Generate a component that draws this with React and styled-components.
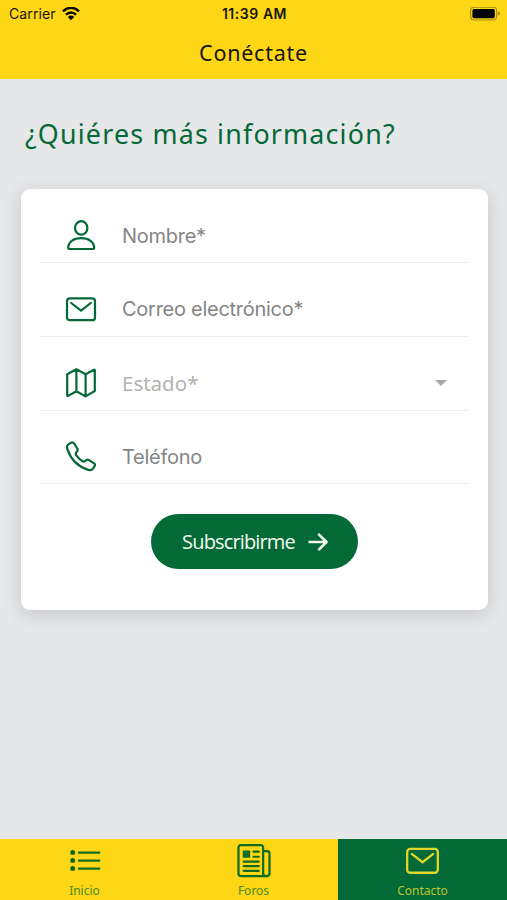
import React from 'react';
import styled, { createGlobalStyle } from 'styled-components';

const GlobalStyle = createGlobalStyle`
  :root {
    --yellow: #fdd616;
    --green: #036937;
    --grey: #e6e7e9;
    --line: #ededed;
  }

  * {
    box-sizing: border-box;
  }

  body {
    margin: 0;
    background: var(--grey);
    font-family: 'Noto Sans', 'Open Sans', sans-serif;
  }
`;

const Screen = styled.div`
  width: 507px;
  height: 900px;
  display: flex;
  flex-direction: column;
  background: var(--grey);
  overflow: hidden;
`;

const Header = styled.header`
  height: 79px;
  flex-shrink: 0;
  background: var(--yellow);
  color: #17150a;
`;

const StatusBar = styled.div`
  height: 27px;
  padding: 0 7px 0 9px;
  display: grid;
  grid-template-columns: 1fr auto 1fr;
  align-items: center;
  font-family: Inter, sans-serif;
  font-size: 14px;
  line-height: 27px;

  .carrier {
    display: flex;
    align-items: center;
    gap: 6px;
    letter-spacing: 0.1px;
  }

  .time {
    font-weight: 600;
    letter-spacing: 0.55px;
  }

  .battery {
    justify-self: end;
  }

  svg {
    display: block;
  }
`;

const Title = styled.h1`
  margin: 0;
  text-align: center;
  font-size: 21.5px;
  font-weight: 400;
  line-height: 52px;
  letter-spacing: 0.75px;
`;

const Main = styled.main`
  flex: 1;
  padding: 0 19.5px 0 20.5px;
`;

const Question = styled.h2`
  margin: 0;
  padding: 35px 0 0 4.5px;
  height: 110px;
  color: var(--green);
  font-size: 26.8px;
  font-weight: 400;
  line-height: 40px;
  letter-spacing: 1.2px;
  white-space: nowrap;
`;

const Card = styled.form`
  height: 420.5px;
  padding: 0 19.5px;
  display: flex;
  flex-direction: column;
  align-items: center;
  background: white;
  border-radius: 9px;
  box-shadow: 0 4px 18px rgba(60, 70, 75, 0.2);
`;

const Row = styled.label`
  width: 100%;
  height: ${props => props.$first ? 74 : 73.8}px;
  padding: 20px 21px 0 25px;
  display: flex;
  align-items: center;
  border-bottom: 1.5px solid var(--line);

  svg {
    flex-shrink: 0;
    color: var(--green);
  }
`;

const Placeholder = styled.span`
  flex: 1;
  margin-left: 25px;
  color: ${props => props.$select ? '#b3b3b3' : '#858585'};
  font-family: ${props => props.$select ? "'Noto Sans', sans-serif" : 'Inter, sans-serif'};
  font-size: ${props => props.$select ? 20.5 : 20}px;
  letter-spacing: ${props => props.$select ? 0 : -0.27}px;
  line-height: 30px;
`;

const Caret = styled.span`
  border: 6px solid transparent;
  border-top-color: #a6a6a6;
  border-bottom: 0;
`;

const Submit = styled.button`
  width: 207px;
  height: 55px;
  margin-top: 30px;
  padding: 0 0 0 2px;
  display: flex;
  align-items: center;
  justify-content: center;
  gap: 13px;
  border: 0;
  border-radius: 28px;
  background: var(--green);
  color: #f3fbf0;
  font-family: 'Open Sans', sans-serif;
  font-size: 20px;
  letter-spacing: -0.85px;
`;

const Tabs = styled.nav`
  height: 61.5px;
  flex-shrink: 0;
  display: grid;
  grid-template-columns: repeat(3, 1fr);
`;

const Tab = styled.a`
  padding-top: 5px;
  display: flex;
  flex-direction: column;
  align-items: center;
  background: ${props => props.$active ? 'var(--green)' : 'var(--yellow)'};
  color: ${props => props.$active ? '#e2d52b' : '#126b20'};

  .icon {
    height: 34px;
    display: flex;
    align-items: center;
  }

  .label {
    margin-top: 4px;
    color: ${props => props.$active ? '#bcc82e' : '#4b8b22'};
    font-size: 12px;
    line-height: 18px;
  }
`;

const Icon = ({ size = 32, width = 2.2, children }) => (
  <svg width={size} height={size} viewBox='0 0 32 32' fill='none' stroke='currentColor' strokeWidth={width} strokeLinecap='round' strokeLinejoin='round'>
    {children}
  </svg>
);

const PersonIcon = () => (
  <Icon>
    <ellipse cx='16.2' cy='7.9' rx='6.2' ry='6.7' />
    <path d='M3.2 28C3.2 22 8.5 18.2 16.2 18.2S29.2 22 29.2 28Q29.2 29 28.2 29H4.2Q3.2 29 3.2 28Z' />
  </Icon>
);

const MailIcon = ({ size, width }) => (
  <Icon size={size} width={width}>
    <rect x='2' y='5.4' width='28' height='21.8' rx='2.8' />
    <path d='M6.2 10 16 17.6 25.8 10' />
  </Icon>
);

const MapIcon = () => (
  <Icon>
    <path d='M2.2 7.2 11.4 2.3 20.6 7.2 29.1 2.8Q29.8 2.5 29.8 3.4V24L20.6 29.4 11.4 24.3 3.1 28.9Q2.2 29.3 2.2 28.4ZM11.4 2.3V24.3M20.6 7.2V29.4' />
  </Icon>
);

const PhoneIcon = () => (
  <Icon>
    <path d='M3.1 3.6 6 1.7C7.1 1.1 8.2 1.3 9 2.4L12.3 7.5C13 8.5 12.8 9.4 12.1 10.3L11.1 11.6C10.5 12.5 10.6 13.2 11.2 14.1C12.7 16.5 15 18.7 17.5 20.2C18.4 20.8 19.1 20.8 19.9 20.2L21.3 19.2C22.2 18.5 23.1 18.5 24 19.1L29 22.4C30 23.1 30.2 24.1 29.6 25.1L28.1 27.5C27.1 29.2 25.2 29.5 23.3 28.9C13.4 25.8 5.7 18.2 2.5 8.4C1.9 6.4 1.7 4.6 3.1 3.6Z' />
  </Icon>
);

const ListIcon = () => (
  <Icon width={2.4}>
    <g fill='currentColor' stroke='none'>
      <circle cx='3.7' cy='7.6' r='2.5' />
      <circle cx='3.7' cy='15.6' r='2.5' />
      <circle cx='3.7' cy='23.6' r='2.5' />
    </g>
    <path d='M10 7.6H30.2M10 15.6H30.2M10 23.6H30.2' />
  </Icon>
);

const NewsIcon = () => (
  <Icon size={34} width={2.1}>
    <path d='M24.6 28V3.5Q24.6 1.1 22.2 1.1H3.8Q1.4 1.1 1.4 3.5V27.8Q1.4 30.2 3.8 30.2H27.8Q30.6 30.2 30.6 27.2V9Q30.6 6.8 28.2 6.8H24.6M24.6 27.2Q24.6 30.2 27.6 30.2' />
    <rect x='5.4' y='6' width='7' height='7' rx='.8' fill='currentColor' stroke='none' />
    <path d='M15.6 7.2H20.5M15.6 12H20.5M6.3 16.5H20.5M6.3 20.8H20.5M6.3 25.2H20.5' />
  </Icon>
);

const App = () => (
  <>
    <GlobalStyle />
    <Screen>
      <Header>
        <StatusBar>
          <div className='carrier'>
            Carrier
            <svg width='18' height='14' viewBox='0 0 18 14' fill='none' stroke='#0c0b05' strokeWidth='2.4'>
              <path d='M.9 4.4Q9-2.9 17.1 4.4M3.9 7.7Q9 3.2 14.1 7.7' />
              <path d='M5.8 9.9Q9 7.1 12.2 9.9L9 13.3Z' fill='#0c0b05' stroke='none' />
            </svg>
          </div>
          <span className='time'>11:39 AM</span>
          <svg className='battery' width='30' height='14' viewBox='0 0 30 14'>
            <rect x='.6' y='.2' width='26' height='12.8' rx='3.5' fill='none' stroke='#a58d16' strokeWidth='1.2' />
            <rect x='2.4' y='2' width='22.4' height='9.2' rx='1.8' />
            <path d='M28 4.4Q30 4.9 30 6.6T28 8.8Z' fill='#a58d16' />
          </svg>
        </StatusBar>
        <Title>Conéctate</Title>
      </Header>

      <Main>
        <Question>¿Quiéres más información?</Question>
        <Card>
          <Row $first>
            <PersonIcon />
            <Placeholder>Nombre*</Placeholder>
          </Row>
          <Row>
            <MailIcon />
            <Placeholder>Correo electrónico*</Placeholder>
          </Row>
          <Row>
            <MapIcon />
            <Placeholder $select>Estado*</Placeholder>
            <Caret />
          </Row>
          <Row>
            <PhoneIcon />
            <Placeholder>Teléfono</Placeholder>
          </Row>
          <Submit type='button'>
            Subscribirme
            <svg width='20' height='20' viewBox='0 0 20 20' fill='none' stroke='currentColor' strokeWidth='2.6' strokeLinejoin='round'>
              <path d='M.5 10H18M10.3 1.8 18.5 10 10.3 18.2' />
            </svg>
          </Submit>
        </Card>
      </Main>

      <Tabs>
        <Tab>
          <div className='icon'><ListIcon /></div>
          <span className='label'>Inicio</span>
        </Tab>
        <Tab>
          <div className='icon'><NewsIcon /></div>
          <span className='label'>Foros</span>
        </Tab>
        <Tab $active>
          <div className='icon'><MailIcon size={35} width={2.1} /></div>
          <span className='label'>Contacto</span>
        </Tab>
      </Tabs>
    </Screen>
  </>
);

export default App;
